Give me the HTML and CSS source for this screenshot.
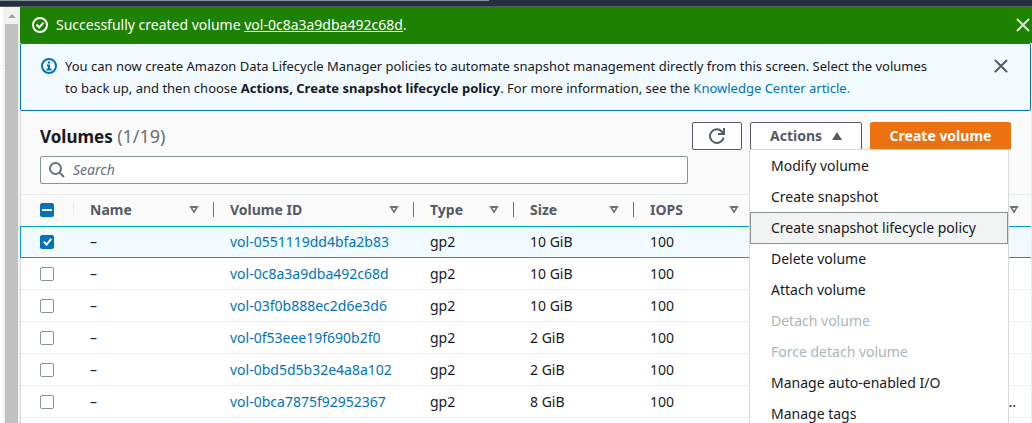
FILE: index.html
```
<!DOCTYPE html>
<html lang="en">
<head>
<meta charset="utf-8">
<title>Volumes</title>
<link rel="stylesheet" href="styles.css">
</head>
<body>
<div class="topbar"><div class="topbar-tab"></div></div>
<div class="shell">
  <aside class="gutter">
    <div class="nav-edge"></div>
    <div class="track">
      <svg class="track-arrow" width="8" height="4" viewBox="0 0 8 4"><path d="M0 4L4 0l4 4z" fill="#a3a3a3"/></svg>
      <div class="thumb"></div>
    </div>
  </aside>
  <main class="content">
    <div class="flash">
      <svg class="icon" width="16" height="16" viewBox="0 0 16 16" fill="none" stroke="#fff" stroke-width="2"><circle cx="8" cy="8" r="7"/><path d="M4.5 7.5l2.700 2.900 4.300-4.800"/></svg>
      <p class="flash-text">Successfully created volume <a class="flash-link" href="#">vol-0c8a3a9dba492c68d</a>.</p>
      <button class="close" type="button" aria-label="Dismiss message"><svg width="14" height="14" viewBox="0 0 14 14" fill="none" stroke="#d9e6d5" stroke-width="2" stroke-linecap="round"><path d="M1.500 1.500l11 11M12.500 1.500l-11 11"/></svg></button>
    </div>
    <div class="info">
      <svg class="icon info-icon" width="16" height="16" viewBox="0 0 16 16" fill="none" stroke="#0073bb" stroke-width="2"><circle cx="8" cy="8" r="7"/><path d="M8 3.500v2M6 7.500h2V11M5.500 11.500h5"/></svg>
      <p class="info-text">You can now create Amazon Data Lifecycle Manager policies to automate snapshot management directly from this screen. Select the volumes to back up, and then choose <b>Actions, Create snapshot lifecycle policy</b>. For more information, see the <a class="link" href="#">Knowledge Center article.</a></p>
      <button class="close info-close" type="button" aria-label="Dismiss notice"><svg width="14" height="14" viewBox="0 0 14 14" fill="none" stroke="#545b64" stroke-width="2" stroke-linecap="round"><path d="M1.500 1.500l11 11M12.500 1.500l-11 11"/></svg></button>
    </div>
    <section class="panel">
      <header class="panel-head">
        <div class="title-row">
          <h1 class="title">Volumes <span class="count">(1/19)</span></h1>
          <div class="actions">
            <button class="btn btn-refresh" type="button" aria-label="Refresh"><svg width="16" height="16" viewBox="0 0 16 16" fill="none" stroke="#545b64" stroke-width="2"><path d="M14.500 9.500A6.800 6.800 0 1 1 12.800 3.500L14.500 5.500M15 0v6H9"/></svg></button>
            <div class="dropdown">
              <button class="btn btn-actions" type="button" aria-expanded="true">Actions <svg width="10" height="8" viewBox="0 0 10 8"><path d="M5 0l5 8H0z" fill="#545b64"/></svg></button>
              <div class="menu" role="menu">
                <button class="item" type="button" role="menuitem">Modify volume</button>
                <button class="item" type="button" role="menuitem">Create snapshot</button>
                <button class="item item-active" type="button" role="menuitem">Create snapshot lifecycle policy</button>
                <button class="item" type="button" role="menuitem">Delete volume</button>
                <button class="item" type="button" role="menuitem">Attach volume</button>
                <button class="item" type="button" role="menuitem" disabled>Detach volume</button>
                <button class="item" type="button" role="menuitem" disabled>Force detach volume</button>
                <button class="item" type="button" role="menuitem">Manage auto-enabled I/O</button>
                <button class="item" type="button" role="menuitem">Manage tags</button>
              </div>
            </div>
            <button class="btn btn-primary" type="button">Create volume</button>
          </div>
        </div>
        <label class="search">
          <svg width="16" height="16" viewBox="0 0 16 16" fill="none" stroke="#687078" stroke-width="2"><circle cx="6.500" cy="6.500" r="5.500"/><path d="M10.500 10.500l4.500 4.500"/></svg>
          <input class="search-input" type="search" placeholder="Search" aria-label="Search volumes">
        </label>
      </header>
      <table class="table">
        <colgroup><col class="c-check"><col class="c-name"><col class="c-id"><col class="c-type"><col class="c-size"><col class="c-iops"><col class="c-name"><col></colgroup>
        <thead>
          <tr>
            <th class="th th-check"><input class="check check-mixed" type="checkbox" aria-label="Select all volumes"></th>
            <th class="th"><span class="th-in">Name <i class="sort"></i></span></th>
            <th class="th"><span class="th-in">Volume ID <i class="sort"></i></span></th>
            <th class="th"><span class="th-in">Type <i class="sort"></i></span></th>
            <th class="th"><span class="th-in">Size <i class="sort"></i></span></th>
            <th class="th"><span class="th-in">IOPS <i class="sort"></i></span></th>
            <th class="th"></th>
            <th class="th"><span class="th-in th-end"><i class="sort"></i></span></th>
          </tr>
        </thead>
        <tbody>
          <tr class="selected"><td class="td"><input class="check" type="checkbox" checked aria-label="Select vol-0551119dd4bfa2b83"></td><td class="td">–</td><td class="td"><a class="link" href="#">vol-0551119dd4bfa2b83</a></td><td class="td">gp2</td><td class="td">10 GiB</td><td class="td">100</td><td class="td"></td><td class="td"></td></tr>
          <tr><td class="td"><input class="check" type="checkbox" aria-label="Select vol-0c8a3a9dba492c68d"></td><td class="td">–</td><td class="td"><a class="link" href="#">vol-0c8a3a9dba492c68d</a></td><td class="td">gp2</td><td class="td">10 GiB</td><td class="td">100</td><td class="td"></td><td class="td"></td></tr>
          <tr><td class="td"><input class="check" type="checkbox" aria-label="Select vol-03f0b888ec2d6e3d6"></td><td class="td">–</td><td class="td"><a class="link" href="#">vol-03f0b888ec2d6e3d6</a></td><td class="td">gp2</td><td class="td">10 GiB</td><td class="td">100</td><td class="td"></td><td class="td"></td></tr>
          <tr><td class="td"><input class="check" type="checkbox" aria-label="Select vol-0f53eee19f690b2f0"></td><td class="td">–</td><td class="td"><a class="link" href="#">vol-0f53eee19f690b2f0</a></td><td class="td">gp2</td><td class="td">2 GiB</td><td class="td">100</td><td class="td"></td><td class="td"></td></tr>
          <tr><td class="td"><input class="check" type="checkbox" aria-label="Select vol-0bd5d5b32e4a8a102"></td><td class="td">–</td><td class="td"><a class="link" href="#">vol-0bd5d5b32e4a8a102</a></td><td class="td">gp2</td><td class="td">2 GiB</td><td class="td">100</td><td class="td"></td><td class="td"></td></tr>
          <tr><td class="td"><input class="check" type="checkbox" aria-label="Select vol-0bca7875f92952367"></td><td class="td">–</td><td class="td"><a class="link" href="#">vol-0bca7875f92952367</a></td><td class="td">gp2</td><td class="td">8 GiB</td><td class="td">100</td><td class="td"></td><td class="td td-more">…</td></tr>
        </tbody>
      </table>
    </section>
  </main>
</div>
</body>
</html>
```
FILE: styles.css
```
* { box-sizing: border-box; }

body {
  margin: 0;
  height: 100vh;
  overflow: hidden;
  display: flex;
  flex-direction: column;
  background: #fff;
  color: #16191f;
  font: 14px/22px "Noto Sans", "Open Sans", sans-serif;
}

button, input { font: inherit; color: inherit; margin: 0; }
p, h1 { margin: 0; }
svg { flex: none; display: block; }

.topbar { flex: none; height: 7px; background: #232f3e; border-bottom: 1px solid #545b64; }
.topbar-tab { width: 489px; height: 1px; background: #879596; }

.shell { flex: 1; min-height: 0; display: flex; }
.gutter { flex: none; width: 20px; display: flex; }
.nav-edge { width: 3px; height: 59px; border-bottom: 1px solid #eaeded; }
.track {
  flex: 1;
  display: flex;
  flex-direction: column;
  align-items: center;
  gap: 6px;
  padding: 7px 1px 0 1px;
  background: #f1f1f1;
}
.thumb { flex: 1; width: 13px; background: #c1c1c1; }

.content { flex: 1; min-width: 0; display: flex; flex-direction: column; }

.flash {
  display: flex;
  align-items: center;
  gap: 8px;
  height: 36px;
  padding: 0 2px 0 12px;
  background: #1d8102;
  color: #fff;
}
.flash-text { flex: 1; }
.flash-link { color: #fff; text-decoration: underline; }
.close { flex: none; padding: 0; border: 0; background: none; }

.info {
  display: flex;
  align-items: flex-start;
  gap: 8px;
  margin-right: 1px;
  padding: 11px 22px 11px 20px;
  border: 1px solid #0073bb;
  border-radius: 2px;
  background: #f1faff;
}
.info-icon { margin-top: 3px; }
.info-text { flex: 1; margin-right: 48px; font-size: 13px; }
.info-close { margin-top: 4px; }
.link { color: #0073bb; text-decoration: none; }

.panel {
  flex: 1;
  margin-right: 1px;
  border-left: 1px solid #d5dbdb;
  box-shadow: 1px 0 0 #eaeded;
}
.panel-head {
  display: flex;
  flex-direction: column;
  gap: 6px;
  padding: 11px 20px 10px 19px;
  background: #fafafa;
}
.title-row { display: flex; justify-content: space-between; align-items: center; }
.title { font-size: 17px; line-height: 24px; font-weight: 700; }
.count { font-size: 18px; font-weight: 400; color: #687078; }

.actions { display: flex; gap: 8px; }
.btn {
  display: flex;
  align-items: center;
  justify-content: center;
  gap: 10px;
  height: 28px;
  padding: 0 20px;
  border: 1px solid #545b64;
  border-radius: 2px;
  background: #fff;
  color: #545b64;
  font-weight: 700;
  white-space: nowrap;
}
.btn-refresh { width: 50px; }
.btn-actions { width: 112px; }
.btn-primary { width: 141px; border-color: #ec7211; background: #ec7211; color: #fff; }

.dropdown { position: relative; }
.menu {
  position: absolute;
  z-index: 2;
  top: 28px;
  left: 0;
  width: 258px;
  padding-top: 1px;
  background: #fff;
  box-shadow: 0 0 0 1px #d5dbdb;
}
.item {
  display: block;
  width: 100%;
  height: 32px;
  margin-top: -1px;
  padding: 0 20px;
  border: 1px solid transparent;
  background: none;
  text-align: left;
  line-height: 22px;
  white-space: nowrap;
}
.item-active { border-color: #879596; background: #f2f3f3; }
.item:disabled { color: #aab7b8; }

.search {
  display: flex;
  align-items: center;
  gap: 8px;
  width: 100%;
  max-width: 648px;
  height: 28px;
  padding: 0 8px;
  border: 1px solid #879596;
  border-radius: 2px;
  background: #fff;
}
.search-input { flex: 1; min-width: 0; padding: 0; border: 0; outline: 0; background: none; appearance: none; }
.search-input::placeholder { color: #687078; font-style: italic; opacity: 1; }

.table { width: 100%; table-layout: fixed; border-collapse: separate; border-spacing: 0; }
.c-check { width: 52px; }
.c-name { width: 140px; }
.c-id { width: 200px; }
.c-type { width: 100px; }
.c-size, .c-iops { width: 120px; }

.th {
  height: 32px;
  padding: 0 0 2px;
  border-top: 1px solid #eaeded;
  background: #fafafa;
  color: #545b64;
  text-align: left;
}
.th-check, .td:first-child { padding-left: 19px; }
.th-in {
  display: flex;
  align-items: center;
  justify-content: space-between;
  height: 15px;
  padding: 0 14px 0 16px;
  border-left: 1px solid #687078;
}
.th:nth-child(2) .th-in { border-color: #eaeded; }
.th-end { justify-content: flex-end; padding-right: 12px; }
.sort { position: relative; width: 10px; height: 8px; background: #687078; clip-path: polygon(0 0, 100% 0, 50% 100%); }
.sort::after {
  content: "";
  position: absolute;
  inset: 2px 3px 3px;
  background: #fafafa;
  clip-path: polygon(0 0, 100% 0, 50% 100%);
}

.td { height: 32px; padding: 0 0 0 17px; border-bottom: 1px solid #eaeded; white-space: nowrap; }
.td-more { padding-right: 15px; text-align: right; }
.selected .td { border-top: 1px solid #00a1c9; border-bottom-color: #00a1c9; background: #f1faff; }
.selected .td:first-child { box-shadow: -1px 0 0 #00a1c9; }

.check {
  appearance: none;
  display: block;
  width: 14px;
  height: 14px;
  border: 1px solid #879596;
  border-radius: 2px;
  background: #fff;
}
.check:checked, .check-mixed { position: relative; border-color: #0073bb; background: #0073bb; }
.check:checked::after {
  content: "";
  position: absolute;
  left: 4px;
  top: 1px;
  width: 3px;
  height: 6px;
  border: solid #fff;
  border-width: 0 2px 2px 0;
  transform: rotate(40deg);
}
.check-mixed::after { content: ""; position: absolute; left: 1px; top: 5px; width: 10px; height: 2px; background: #fff; }
```
